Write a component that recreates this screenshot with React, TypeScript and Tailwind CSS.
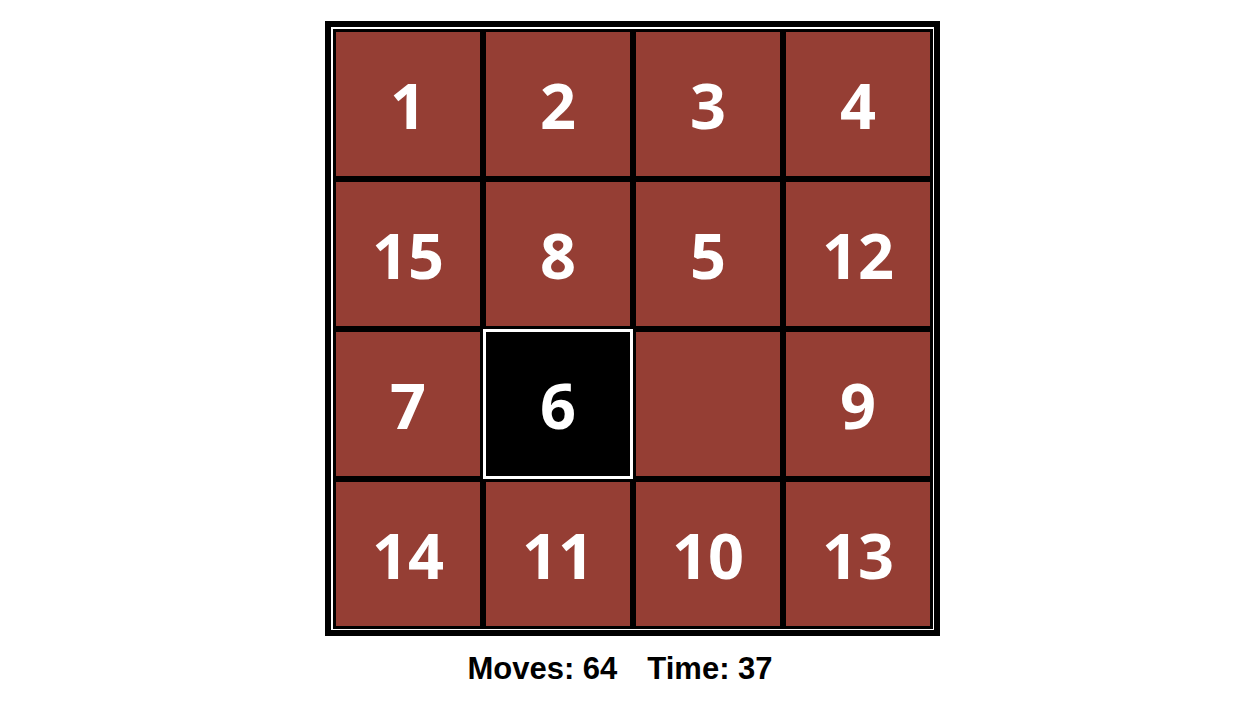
import { useEffect, useState } from "react";

const START: (number | null)[] = [1, 2, 3, 4, 15, 8, 5, 12, 7, 6, null, 9, 14, 11, 10, 13];

function Tile({
  value,
  active,
  onClick,
  onFocusTile,
}: {
  value: number | null;
  active: boolean;
  onClick: () => void;
  onFocusTile: () => void;
}) {
  return (
    <button
      type="button"
      onClick={onClick}
      onMouseEnter={onFocusTile}
      aria-label={value === null ? "Empty space" : `Tile ${value}`}
      className={
        "flex aspect-square min-w-0 items-center justify-center border-3 pt-[3px] font-['Open_Sans','Noto_Sans',sans-serif] text-[63px] font-bold text-white " +
        (active ? "border-white bg-black" : "border-black bg-[#953e34]")
      }
    >
      {value}
    </button>
  );
}

export default function App() {
  const [tiles, setTiles] = useState(START);
  const [active, setActive] = useState(9);
  const [moves, setMoves] = useState(64);
  const [time, setTime] = useState(37);
  const [running, setRunning] = useState(false);

  useEffect(() => {
    if (!running) return;
    const timer = setInterval(() => setTime((t) => t + 1), 1000);
    return () => clearInterval(timer);
  }, [running]);

  function move(index: number) {
    const gap = tiles.indexOf(null);
    const distance =
      Math.abs((index % 4) - (gap % 4)) + Math.abs(Math.floor(index / 4) - Math.floor(gap / 4));
    if (distance !== 1) return;
    const next = [...tiles];
    next[gap] = next[index];
    next[index] = null;
    setTiles(next);
    setMoves(moves + 1);
    setRunning(true);
  }

  return (
    <main className="min-h-screen bg-white pt-[21px] font-['Liberation_Sans',Arial,sans-serif] text-black">
      <div className="flex justify-center pl-[11px]">
        <div className="w-full max-w-[615px] border-6 border-black bg-white pt-[2px] pr-px pb-px pl-[2px]">
          <div className="grid grid-cols-4">
            {tiles.map((value, i) => (
              <Tile
                key={i}
                value={value}
                active={i === active}
                onClick={() => move(i)}
                onFocusTile={() => setActive(i)}
              />
            ))}
          </div>
        </div>
      </div>
      <div className="flex justify-center gap-[30px] pt-[15px] pr-[14px] text-[31px] leading-9 font-bold">
        <p>Moves: {moves}</p>
        <p>Time: {time}</p>
      </div>
    </main>
  );
}
